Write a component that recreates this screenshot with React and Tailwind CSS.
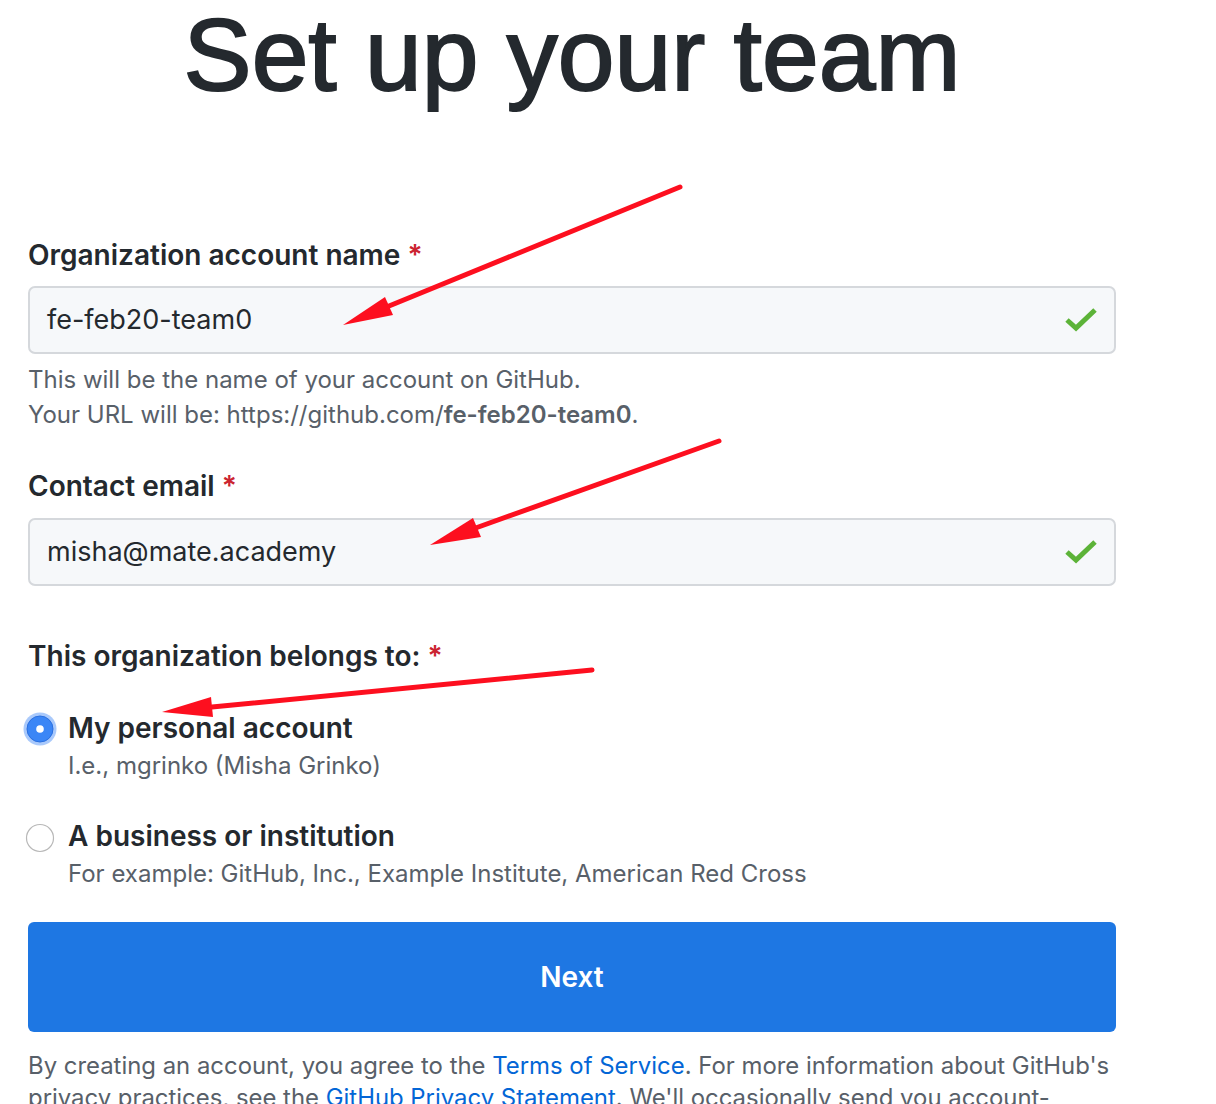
import React from 'react';

const Check = () => (
    <svg width="34" height="28" viewBox="0 0 34 28" className="shrink-0">
        <path d="M3 14 L12 22 L31 4" fill="none" stroke="#5cb338" strokeWidth="5" strokeLinejoin="miter" />
    </svg>
);

const Radio = ({ checked }) =>
    checked ? (
        <svg width="34" height="34" viewBox="0 0 34 34" className="shrink-0">
            <circle cx="17" cy="17" r="16.5" fill="#a9c9fb" />
            <circle cx="17" cy="17" r="13" fill="#3b86f6" stroke="#2a6fe0" strokeWidth="1" />
            <circle cx="17" cy="17" r="3.8" fill="#ffffff" />
        </svg>
    ) : (
        <svg width="34" height="34" viewBox="0 0 34 34" className="shrink-0">
            <circle cx="17" cy="17" r="13.5" fill="#ffffff" stroke="#b8b8b8" strokeWidth="1.2" />
        </svg>
    );

const Arrow = ({ x1, y1, tip, c1, c2 }) => (
    <g>
        <line x1={x1} y1={y1} x2={(c1[0] + c2[0]) / 2} y2={(c1[1] + c2[1]) / 2} stroke="#fd0f1f" strokeWidth="5" strokeLinecap="round" />
        <polygon points={`${tip[0]},${tip[1]} ${c1[0]},${c1[1]} ${c2[0]},${c2[1]}`} fill="#fd0f1f" />
    </g>
);

const Label = ({ children, className = '' }) => (
    <div className={`text-[28px] leading-[32px] font-semibold text-[#24292e] ${className}`}>
        {children} <span className="text-[#cb2431]">*</span>
    </div>
);

const Field = ({ value }) => (
    <div className="h-[68px] flex items-center justify-between pl-[17px] pr-[16px] bg-[#f6f8fa] border-2 border-[#d5d8dc] rounded-[7px]">
        <span className="text-[27px] text-[#24292e]">{value}</span>
        <Check />
    </div>
);

export default function App() {
    return (
        <div className="relative w-[1216px] h-[1104px] overflow-hidden bg-white" style={{ fontFamily: 'Inter, "Noto Sans", sans-serif' }}>
            <div className="w-[1116px] pl-[28px] pt-[4px]">
                <h1
                    className="text-center text-[102px] leading-[102px] font-normal text-[#24292e] [-webkit-text-stroke:2px_#24292e]"
                    style={{ fontFamily: '"Liberation Sans", Arial, sans-serif' }}
                >
                    Set up your team
                </h1>

                <Label className="mt-[133px]">Organization account name</Label>
                <div className="mt-[15px]">
                    <Field value="fe-feb20-team0" />
                </div>
                <div className="mt-[8px] text-[24px] leading-[35px] text-[#586069]">
                    <p>This will be the name of your account on GitHub.</p>
                    <p>
                        Your URL will be: https://github.com/<span className="font-semibold">fe-feb20-team0</span>.
                    </p>
                </div>

                <Label className="mt-[38px]">Contact email</Label>
                <div className="mt-[16px]">
                    <Field value="misha@mate.academy" />
                </div>

                <Label className="mt-[54px]">This organization belongs to:</Label>

                <div className="mt-[40px] flex">
                    <div className="w-[40px] -ml-[5px] mr-[5px]">
                        <Radio checked />
                    </div>
                    <div>
                        <div className="text-[28px] leading-[32px] font-semibold text-[#24292e]">My personal account</div>
                        <div className="mt-[4px] text-[24px] leading-[35px] text-[#586069]">I.e., mgrinko (Misha Grinko)</div>
                    </div>
                </div>

                <div className="mt-[37px] flex">
                    <div className="w-[40px] -ml-[5px] mr-[5px] pt-[1px]">
                        <Radio />
                    </div>
                    <div>
                        <div className="text-[28px] leading-[32px] font-semibold text-[#24292e]">A business or institution</div>
                        <div className="mt-[4px] text-[24px] leading-[35px] text-[#586069]">
                            For example: GitHub, Inc., Example Institute, American Red Cross
                        </div>
                    </div>
                </div>

                <button className="mt-[31px] w-full h-[110px] rounded-[6px] bg-[#1e77e3] text-white text-[28px] font-semibold">
                    Next
                </button>

                <p className="mt-[18px] w-[1088px] text-[23.9px] leading-[32px] text-[#586069]">
                    By creating an account, you agree to the <span className="text-[#0366d6]">Terms of Service</span>. For more information about GitHub's
                    {' '}privacy practices, see the <span className="text-[#0366d6]">GitHub Privacy Statement</span>. We'll occasionally send you account-related emails.
                </p>
            </div>

            <svg className="absolute inset-0 pointer-events-none" width="1216" height="1104" viewBox="0 0 1216 1104">
                <Arrow x1={680} y1={187} tip={[343, 325]} c1={[385, 297]} c2={[393, 315]} />
                <Arrow x1={719} y1={441} tip={[430, 545]} c1={[473, 518]} c2={[481, 537]} />
                <Arrow x1={592} y1={670} tip={[162, 712]} c1={[211, 697]} c2={[213, 717]} />
            </svg>
        </div>
    );
}
